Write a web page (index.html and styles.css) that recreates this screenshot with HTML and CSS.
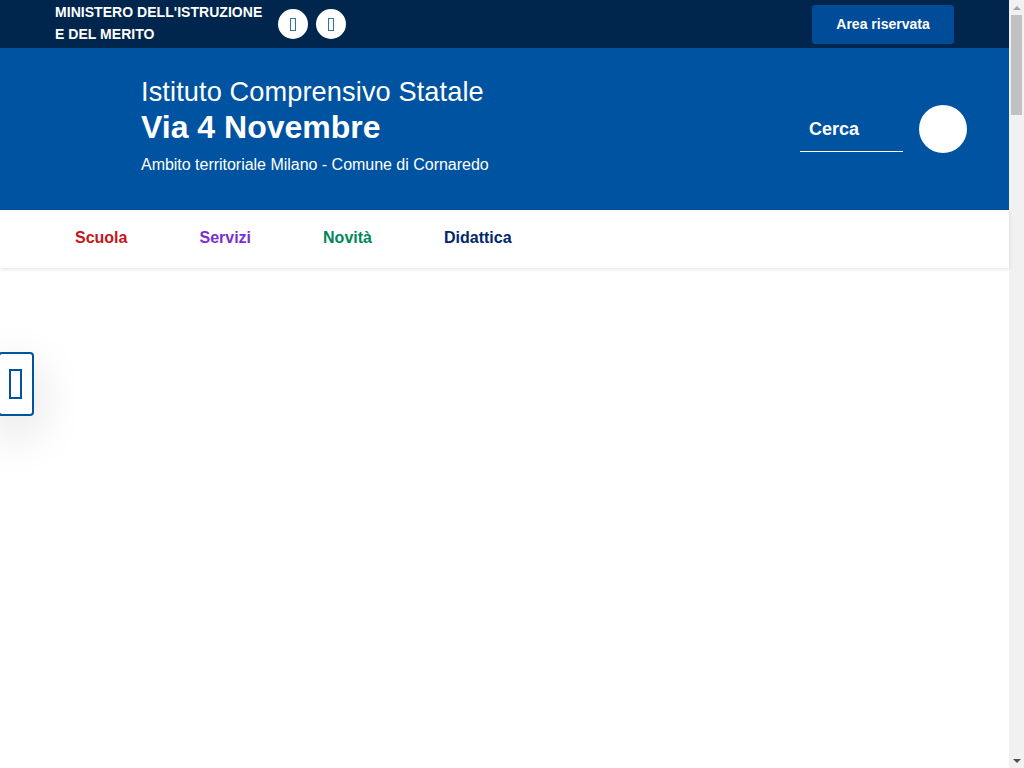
FILE: index.html
```html
<!DOCTYPE html>
<html lang="it">
<head>
<meta charset="utf-8">
<title>Istituto Comprensivo Statale Via 4 Novembre</title>
<link rel="stylesheet" href="styles.css">
</head>
<body>
<div class="page">
  <div class="topbar">
    <a class="ministry" href="#">MINISTERO DELL'ISTRUZIONE<br>E DEL MERITO</a>
    <div class="socials">
      <a class="social" href="#"><span class="tofu"></span></a>
      <a class="social" href="#"><span class="tofu"></span></a>
    </div>
    <a class="reserved" href="#">Area riservata</a>
  </div>
  <header class="header">
    <div class="brand">
      <div class="brand-pre">Istituto Comprensivo Statale</div>
      <div class="brand-name">Via 4 Novembre</div>
      <div class="brand-sub">Ambito territoriale Milano - Comune di Cornaredo</div>
    </div>
    <div class="search">
      <div class="search-field">Cerca</div>
      <div class="search-btn"></div>
    </div>
  </header>
  <nav class="nav">
    <a class="nav-item red" href="#">Scuola</a>
    <a class="nav-item purple" href="#">Servizi</a>
    <a class="nav-item green" href="#">Novità</a>
    <a class="nav-item navy" href="#">Didattica</a>
  </nav>
  <a class="side" href="#"><span class="side-tofu"></span></a>
</div>
<div class="scrollbar">
  <div class="arrow-btn"><span class="arrow-up"></span></div>
  <div class="track"><div class="thumb"></div></div>
  <div class="arrow-btn"><span class="arrow-down"></span></div>
</div>
</body>
</html>
```
FILE: styles.css
```css
* { box-sizing: border-box; }
html, body { height: 100%; }
body {
  margin: 0;
  background: #fff;
  font-family: "Liberation Sans", Arial, sans-serif;
  color: #fff;
  display: flex;
  overflow: hidden;
}
a { text-decoration: none; color: inherit; }
.page { flex: 1; min-width: 0; position: relative; }
.topbar {
  height: 48px;
  background: #00264d;
  display: flex;
  align-items: center;
  padding: 0 55px;
}
.ministry {
  font-size: 14px;
  font-weight: 700;
  line-height: 22px;
  letter-spacing: .04px;
  width: 223px;
  white-space: nowrap;
  padding-bottom: 2px;
}
.socials { display: flex; gap: 8px; }
.social {
  width: 30px;
  height: 30px;
  border-radius: 50%;
  background: #fff;
  display: flex;
  align-items: center;
  justify-content: center;
  padding-right: 1px;
}
.tofu {
  width: 6px;
  height: 13px;
  border: 1px solid #33709f;
}
.reserved {
  margin-left: auto;
  width: 142px;
  height: 39px;
  background: #004c99;
  border-radius: 3px;
  font-size: 14px;
  font-weight: 700;
  display: flex;
  align-items: center;
  justify-content: center;
}
.header {
  height: 162px;
  background: #0053a1;
  display: flex;
  align-items: center;
  justify-content: space-between;
  padding: 0 42px 0 141px;
}
.brand { padding-bottom: 7px; }
.brand-pre { font-size: 27.2px; line-height: 32px; letter-spacing: .1px; }
.brand-name { font-size: 32px; font-weight: 700; line-height: 38px; }
.brand-sub { font-size: 16px; line-height: 20px; margin-top: 9px; letter-spacing: -.02px; }
.search { display: flex; align-items: flex-start; gap: 16px; }
.search-field {
  width: 103px;
  height: 47px;
  border-bottom: 1px solid #fff;
  padding-left: 9px;
  font-size: 18px;
  font-weight: 700;
  line-height: 48px;
}
.search-btn { width: 48px; height: 48px; border-radius: 50%; background: #fff; }
.nav {
  height: 58px;
  background: #fff;
  box-shadow: 0 1px 4px rgba(0, 0, 0, .12);
  display: flex;
  align-items: center;
  gap: 72px;
  padding: 0 0 2px 75px;
  position: relative;
  font-size: 16px;
  font-weight: 700;
}
.red { color: #c4161c; }
.purple { color: #7a2fd0; }
.green { color: #00875a; }
.navy { color: #00266b; }
.side {
  position: absolute;
  left: -2px;
  top: 352px;
  width: 36px;
  height: 64px;
  background: #fff;
  border: 2px solid #00549f;
  border-radius: 4px;
  box-shadow: 0 16px 48px rgba(0, 0, 0, .15);
  display: flex;
  align-items: center;
  justify-content: center;
  padding-right: 1px;
}
.side-tofu {
  width: 13px;
  height: 30px;
  border: 2px solid #00549f;
}
.scrollbar {
  width: 15px;
  flex: none;
  background: #f1f1f1;
  display: flex;
  flex-direction: column;
}
.arrow-btn {
  height: 15px;
  flex: none;
  display: flex;
  align-items: center;
  justify-content: center;
}
.arrow-up, .arrow-down {
  width: 0;
  height: 0;
  border-left: 4px solid transparent;
  border-right: 4px solid transparent;
}
.arrow-up { border-bottom: 4px solid #a3a3a3; }
.arrow-down { border-top: 4px solid #505050; }
.track { flex: 1; }
.thumb {
  width: 11px;
  height: 100px;
  margin-left: 2px;
  background: #c1c1c1;
}
```
